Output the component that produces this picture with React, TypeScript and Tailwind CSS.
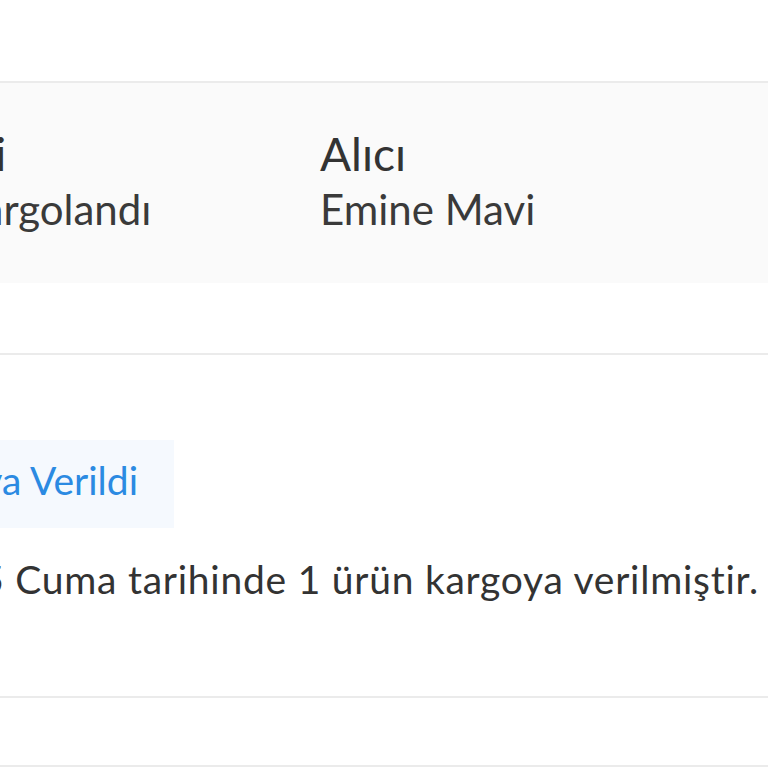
export default function App() {
  return (
    <div className="w-[768px] h-[768px] overflow-hidden bg-white font-['Lato',sans-serif] text-[#333]">
      <div className="h-[81px]" />
      {/* Summary panel */}
      <div className="h-[202px] border-t-2 border-[#ebebeb] bg-[#fafafa] pt-[45px]">
        <div className="-ml-[240px] flex">
          <div className="w-[560px] shrink-0 whitespace-nowrap">
            <div className="text-[46px] leading-[52px] tracking-[-0.5px]">Sipariş Özeti</div>
            <div className="text-[42px] leading-[58px] text-[#3a3a3a]">1 Teslimat Kargolandı</div>
          </div>
          <div className="shrink-0 whitespace-nowrap">
            <div className="text-[46px] leading-[52px]">Alıcı</div>
            <div className="text-[42px] leading-[58px] text-[#3a3a3a]">Emine Mavi</div>
          </div>
        </div>
      </div>
      <div className="h-[70px]" />
      <div className="border-t-2 border-[#ebebeb]" />
      {/* Delivery block */}
      <div className="h-[341px] pt-[85px]">
        <div className="-ml-[220px] flex flex-col items-start">
          <div className="h-[88px] bg-[#f5f9fe] pl-[102px] pr-[36px] pb-[8px] flex items-center text-[39px] text-[#2b8ae2] whitespace-nowrap">
            Kargoya Verildi
          </div>
          <div className="mt-[29px] text-[39px] leading-[44px] tracking-[0.75px] text-[#333] whitespace-nowrap">
            7 Mart 2025 Cuma tarihinde 1 ürün kargoya verilmiştir.
          </div>
        </div>
      </div>
      <div className="border-t-2 border-[#ebebeb]" />
      <div className="h-[67px]" />
      <div className="border-t-2 border-[#ebebeb]" />
    </div>
  );
}
